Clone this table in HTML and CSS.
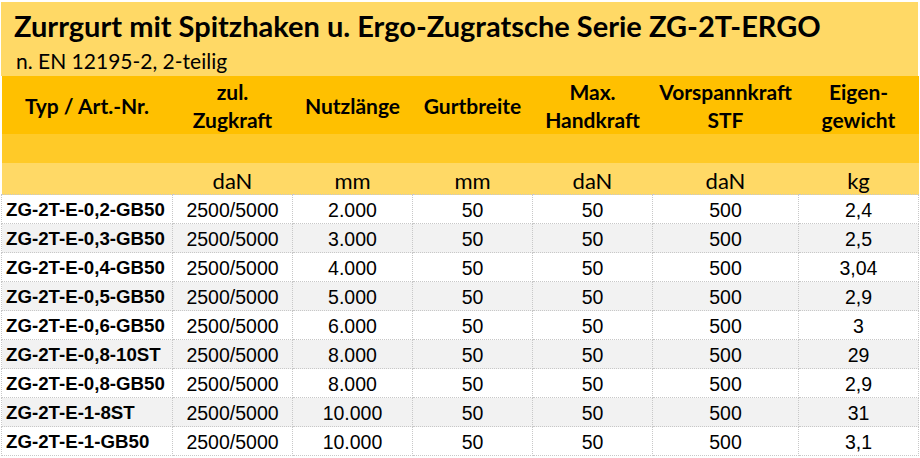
FILE: index.html
```html
<!DOCTYPE html>
<html lang="de">
<head>
<meta charset="utf-8">
<title>Zurrgurt ZG-2T-ERGO</title>
<link rel="stylesheet" href="styles.css">
</head>
<body>
<div class="sheet">
  <div class="title-band">
    <h1 class="title">Zurrgurt mit Spitzhaken u. Ergo-Zugratsche Serie ZG-2T-ERGO</h1>
    <p class="subtitle">n. EN 12195-2, 2-teilig</p>
  </div>
  <table class="grid">
    <colgroup>
      <col class="c-typ"><col class="c-std"><col class="c-std"><col class="c-std"><col class="c-std"><col class="c-wide"><col class="c-std">
    </colgroup>
    <thead>
      <tr class="head">
        <th>Typ / Art.-Nr.</th>
        <th>zul.<br>Zugkraft</th>
        <th>Nutzlänge</th>
        <th>Gurtbreite</th>
        <th>Max.<br>Handkraft</th>
        <th>Vorspannkraft<br>STF</th>
        <th>Eigen-<br>gewicht</th>
      </tr>
      <tr class="blank"><th></th><th></th><th></th><th></th><th></th><th></th><th></th></tr>
      <tr class="units">
        <th></th><th>daN</th><th>mm</th><th>mm</th><th>daN</th><th>daN</th><th>kg</th>
      </tr>
    </thead>
    <tbody>
      <tr><td>ZG-2T-E-0,2-GB50</td><td>2500/5000</td><td>2.000</td><td>50</td><td>50</td><td>500</td><td>2,4</td></tr>
      <tr><td>ZG-2T-E-0,3-GB50</td><td>2500/5000</td><td>3.000</td><td>50</td><td>50</td><td>500</td><td>2,5</td></tr>
      <tr><td>ZG-2T-E-0,4-GB50</td><td>2500/5000</td><td>4.000</td><td>50</td><td>50</td><td>500</td><td>3,04</td></tr>
      <tr><td>ZG-2T-E-0,5-GB50</td><td>2500/5000</td><td>5.000</td><td>50</td><td>50</td><td>500</td><td>2,9</td></tr>
      <tr><td>ZG-2T-E-0,6-GB50</td><td>2500/5000</td><td>6.000</td><td>50</td><td>50</td><td>500</td><td>3</td></tr>
      <tr><td>ZG-2T-E-0,8-10ST</td><td>2500/5000</td><td>8.000</td><td>50</td><td>50</td><td>500</td><td>29</td></tr>
      <tr><td>ZG-2T-E-0,8-GB50</td><td>2500/5000</td><td>8.000</td><td>50</td><td>50</td><td>500</td><td>2,9</td></tr>
      <tr><td>ZG-2T-E-1-8ST</td><td>2500/5000</td><td>10.000</td><td>50</td><td>50</td><td>500</td><td>31</td></tr>
      <tr><td>ZG-2T-E-1-GB50</td><td>2500/5000</td><td>10.000</td><td>50</td><td>50</td><td>500</td><td>3,1</td></tr>
    </tbody>
  </table>
</div>
</body>
</html>
```
FILE: styles.css
```css
* { box-sizing: border-box; }
html, body { margin: 0; padding: 0; background: #ffffff; }
body { font-family: "Lato", "Liberation Sans", sans-serif; color: #000; }

.sheet {
  width: 917px;
  margin: 2px 0 0 1px;
}

.title-band {
  background: #ffd966;
  height: 74px;
  padding: 6px 0 0 13px;
}
.title {
  margin: 0;
  font-size: 29px;
  line-height: 36px;
  font-weight: 700;
}
.subtitle {
  margin: 2px 0 0 0;
  font-size: 21px;
  line-height: 30px;
  padding-left: 2px;
}

.grid {
  width: 917px;
  border-collapse: collapse;
  table-layout: fixed;
}
.c-typ { width: 171px; }
.c-std { width: 120px; }
.c-wide { width: 146px; }

.grid th {
  padding: 0;
  text-align: center;
  vertical-align: middle;
}
.head th {
  background: #ffc000;
  height: 58px;
  padding-top: 2px;
  font-size: 21px;
  font-weight: 700;
  line-height: 28px;
}
.blank th {
  background: #ffca28;
  height: 29px;
}
.units th {
  background: #ffd966;
  height: 31px;
  padding-top: 4px;
  font-size: 22px;
  font-weight: 400;
  vertical-align: middle;
  line-height: 27px;
}

.grid td {
  height: 29px;
  padding: 2px 0 0 0;
  font-family: "Liberation Sans", Arial, sans-serif;
  font-size: 19.5px;
  text-align: center;
  white-space: nowrap;
  border: 1px dotted #c8c8c8;
  line-height: 26px;
}
.grid td:first-child {
  text-align: left;
  padding-left: 4px;
  font-weight: 700;
  font-size: 18.7px;
}
.grid tbody tr:nth-child(even) td { background: #f2f2f2; }
```
